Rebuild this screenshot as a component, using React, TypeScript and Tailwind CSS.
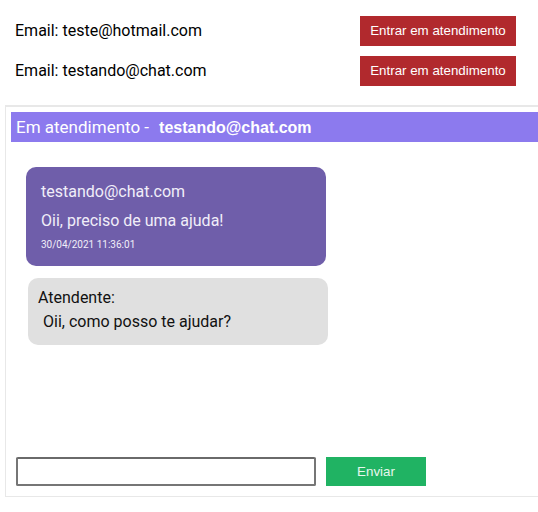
const clientes = ["teste@hotmail.com", "testando@chat.com"];

export default function App() {
  return (
    <div className="h-[512px] w-[538px] overflow-hidden bg-white font-['Roboto',sans-serif] text-black">
      {/* lista de clientes */}
      <div className="flex flex-col gap-[10px] pt-4">
        {clientes.map((email) => (
          <div key={email} className="flex h-[30px] items-center justify-between pl-[15px] pr-[22px]">
            <span className="text-base">Email: {email}</span>
            <button className="h-[30px] w-[156px] bg-[#b1292d] font-['Liberation_Sans',Arial,sans-serif] text-[13.33px] text-white">
              Entrar em atendimento
            </button>
          </div>
        ))}
      </div>

      {/* chat */}
      <div className="ml-[5px] mt-[19px] flex h-[392px] w-[560px] flex-col border border-t-2 border-[#e8e8e8] px-[5px] pb-[10px] pt-[5px]">
        <div className="flex h-[30px] items-center bg-[#8c7aee] pl-[5px] pt-px text-white">
          <span className="text-[17px]">Em atendimento -</span>
          <span className="ml-[10px] font-['Liberation_Sans',Arial,sans-serif] text-[16px] font-bold">testando@chat.com</span>
        </div>

        <div className="flex flex-1 flex-col gap-3 pl-[15px] pt-[25px]">
          <div className="w-[300px] rounded-[10px] bg-[#6f5eaa] px-[15px] pb-[14px] pt-[13px] text-[#f1eef9]">
            <div className="text-base leading-6">testando@chat.com</div>
            <div className="mt-[5px] text-base leading-6">Oii, preciso de uma ajuda!</div>
            <div className="mt-[5px] text-[10px] leading-[14px]">30/04/2021 11:36:01</div>
          </div>
          <div className="ml-[2px] w-[300px] rounded-[10px] bg-[#e0e0e0] pb-[11px] pl-[10px] pt-2 text-[#111]">
            <div className="text-base leading-6">Atendente:</div>
            <div className="pl-[5px] text-base leading-6">Oii, como posso te ajudar?</div>
          </div>
        </div>

        <div className="flex gap-[10px] pl-[5px]">
          <input className="h-[29px] w-[300px] rounded-[2px] border-2 border-[#767676] border-t-[#6a6a6a] bg-white px-1 text-sm" />
          <button className="h-[29px] w-[100px] bg-[#20b363] font-['Liberation_Sans',Arial,sans-serif] text-[13.33px] text-[#e8f7ee]">
            Enviar
          </button>
        </div>
      </div>
    </div>
  );
}
